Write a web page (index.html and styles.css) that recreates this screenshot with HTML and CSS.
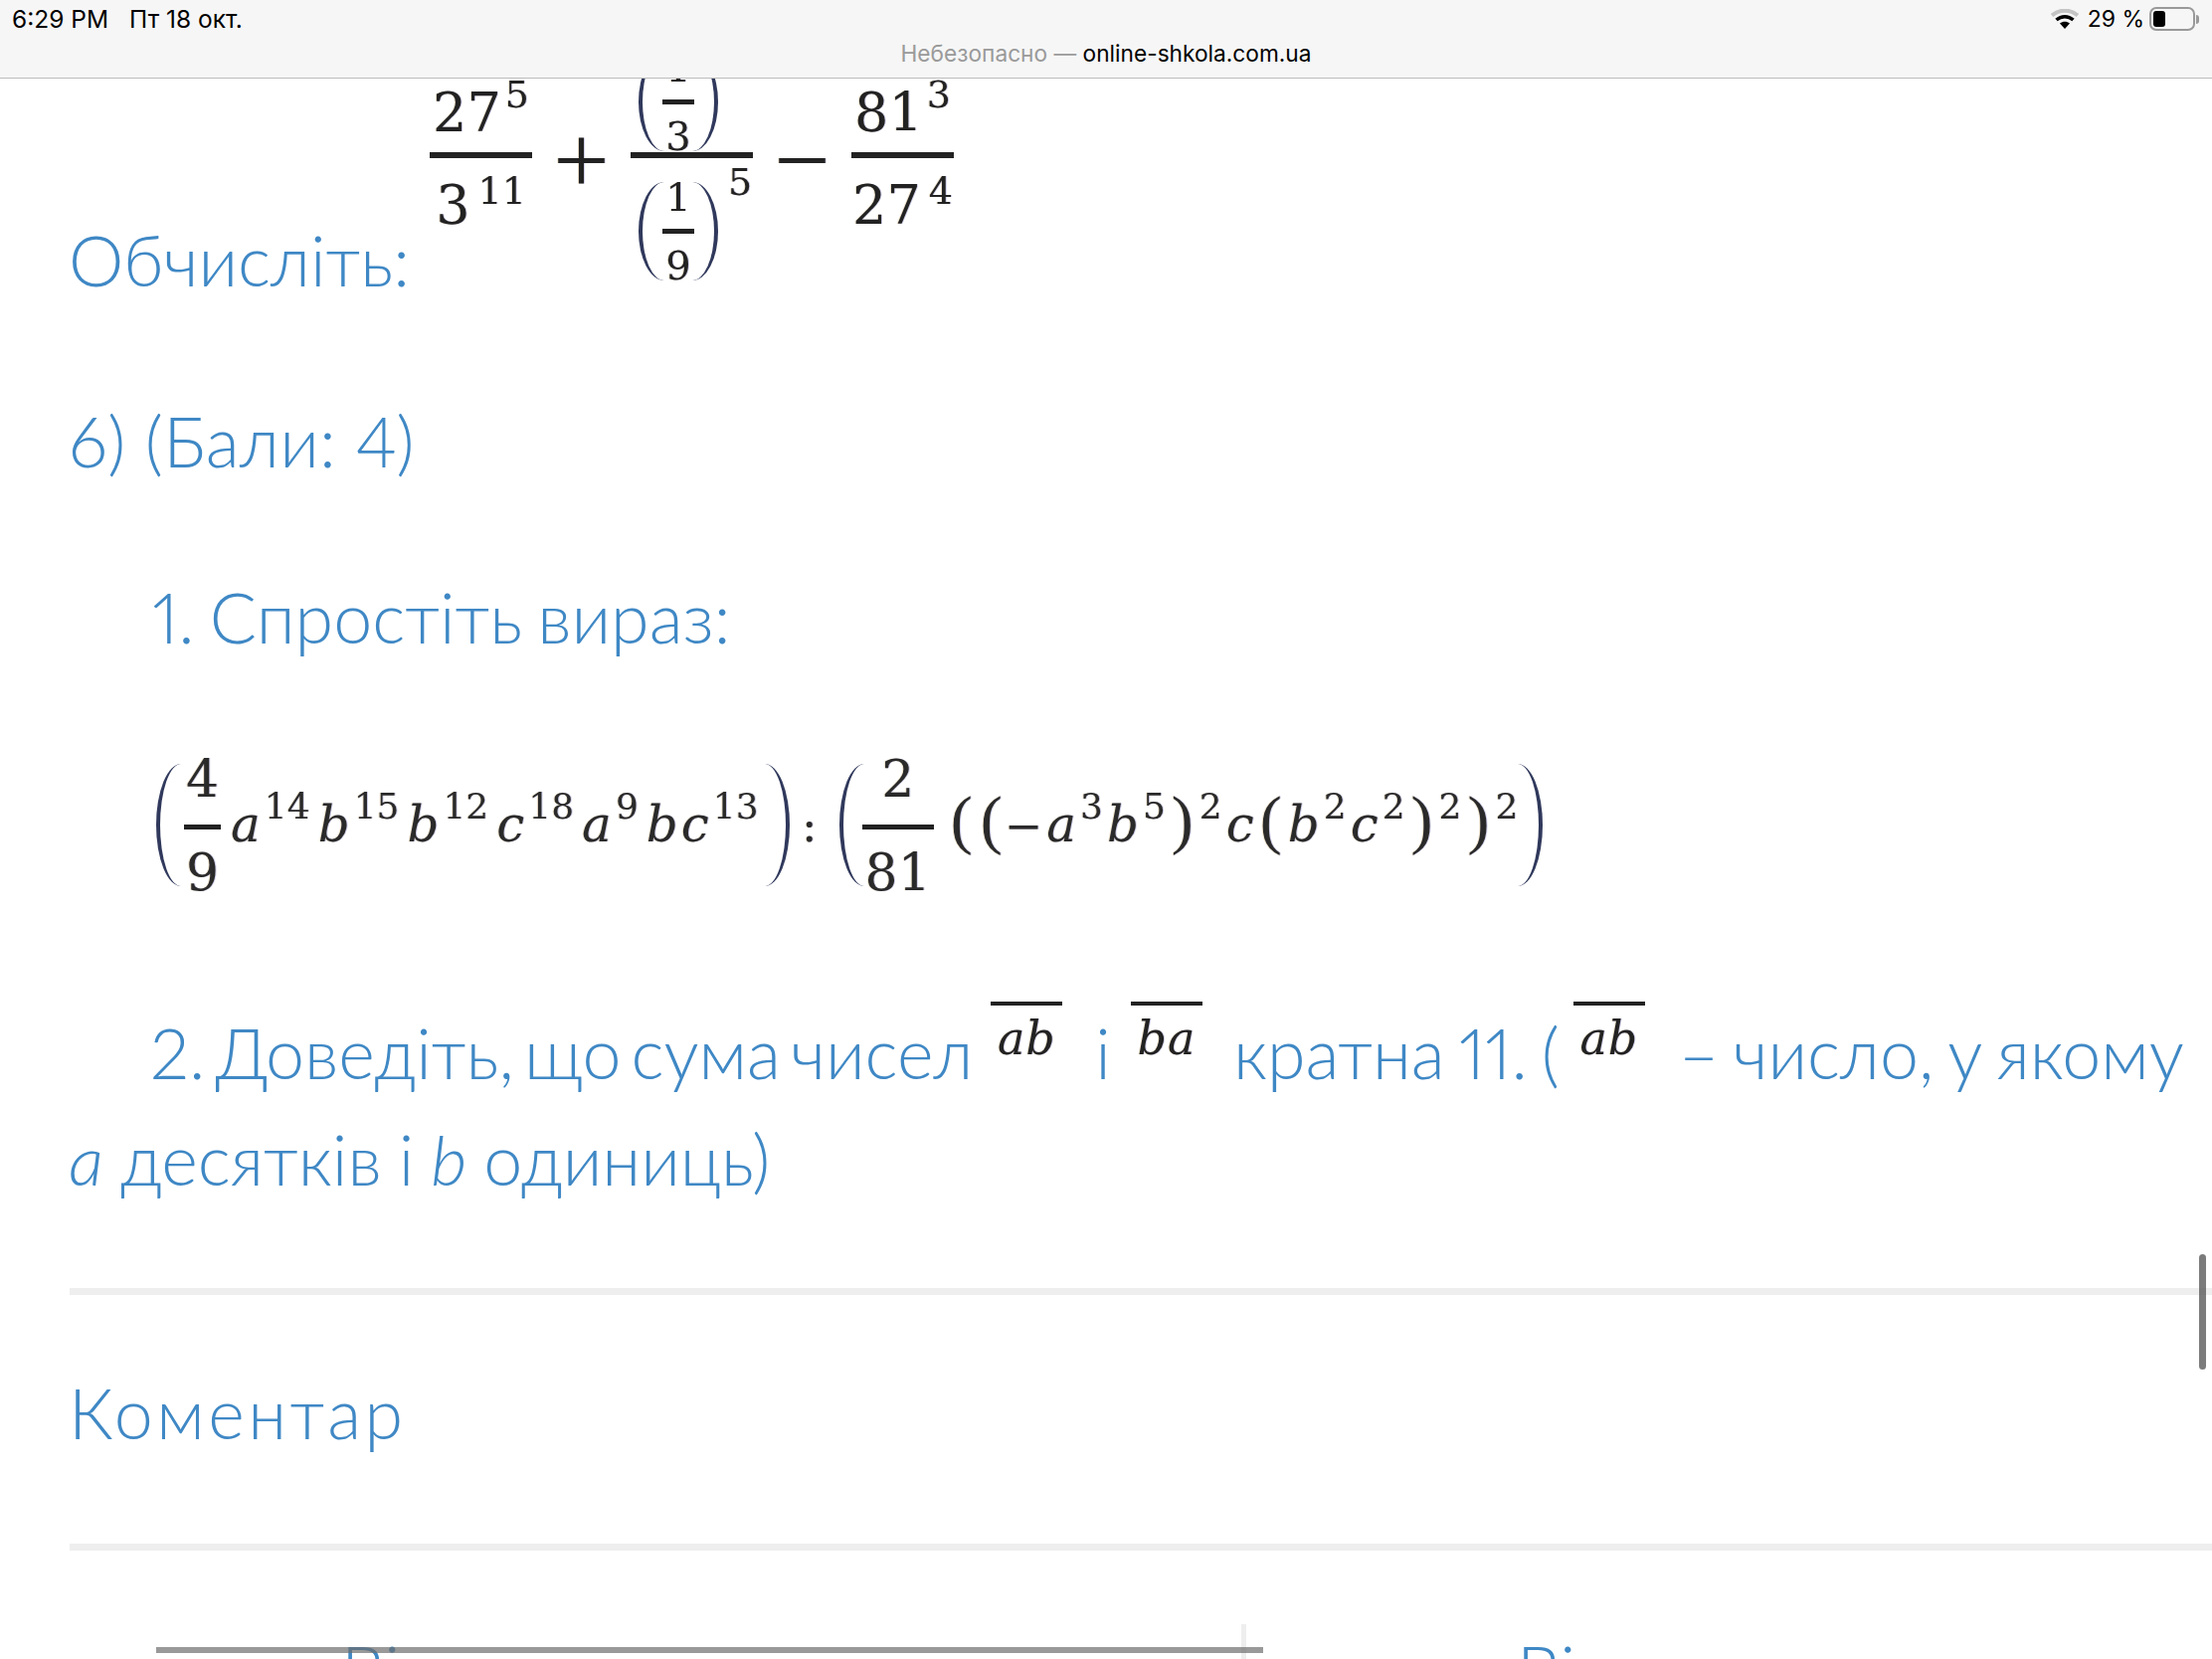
FILE: index.html
```html
<!DOCTYPE html>
<html lang="uk">
<head>
<meta charset="utf-8">
<title>online-shkola.com.ua</title>
<link rel="stylesheet" href="styles.css">
</head>
<body>
<header class="bar">
  <div class="status">
    <div class="status-left"><span>6:29 PM</span><span>Пт 18 окт.</span></div>
    <div class="status-right">
      <svg class="wifi" width="28" height="20" viewBox="0 0 28 20"><path d="M1 6.500C8.500 0 19.500 0 27 6.500" fill="none" stroke="#c4c4c4" stroke-width="4"/><path d="M5.500 11C10.500 6.500 17.500 6.500 22.500 11" fill="none" stroke="#000" stroke-width="3.500"/><path d="M14 20L9 14.500C12 12 16 12 19 14.500Z" fill="#000"/></svg>
      <span class="pct">29 %</span>
      <div class="battery"><div class="battery-fill"></div></div>
      <div class="nub"></div>
    </div>
  </div>
  <div class="address"><span class="insecure">Небезопасно — </span>online-shkola.com.ua</div>
</header>
<main class="page">
  <div class="calc">
    <p class="label">Обчисліть:</p>
    <div class="bigmath">
      <div class="frac">
        <div class="num"><span class="expr">27<sup>5</sup></span></div>
        <div class="rule"></div>
        <div class="den"><span class="expr">3<sup class="low">11</sup></span></div>
      </div>
      <div class="op">+</div>
      <div class="frac wide">
        <div class="num left">
          <div class="pgroup"><div class="paren-l mid"></div><div class="mini"><span>1</span><div class="mini-rule"></div><span>3</span></div><div class="paren-r mid"></div></div>
        </div>
        <div class="rule"></div>
        <div class="den lower">
          <div class="pgroup drop"><div class="paren-l mid"></div><div class="mini"><span>1</span><div class="mini-rule"></div><span>9</span></div><div class="paren-r mid"></div></div>
          <span class="lone">5</span>
        </div>
      </div>
      <div class="op">−</div>
      <div class="frac">
        <div class="num"><span class="expr">81<sup>3</sup></span></div>
        <div class="rule"></div>
        <div class="den"><span class="expr">27<sup class="low">4</sup></span></div>
      </div>
    </div>
  </div>
  <p class="line score">6) (Бали: 4)</p>
  <p class="line indent task">1. Спростіть вираз:</p>
  <div class="formula">
    <div class="paren-l big"></div>
    <div class="sfrac"><span>4</span><div class="rule"></div><span>9</span></div>
    <div class="run"><i>a</i><sup>14</sup><i>b</i><sup>15</sup><i>b</i><sup>12</sup><i>c</i><sup>18</sup><i>a</i><sup>9</sup><i>b</i><i class="tight">c</i><sup>13</sup></div>
    <div class="paren-r big"></div>
    <div class="colon">:</div>
    <div class="paren-l big"></div>
    <div class="sfrac second"><span>2</span><div class="rule"></div><span>81</span></div>
    <div class="run run2"><b class="p">(</b><b class="p">(</b><span class="m">−</span><i>a</i><sup>3</sup><i>b</i><sup>5</sup><b class="p">)</b><sup>2</sup><i>c</i><b class="p">(</b><i>b</i><sup>2</sup><i>c</i><sup>2</sup><b class="p">)</b><sup>2</sup><b class="p">)</b><sup>2</sup></div>
    <div class="paren-r big"></div>
  </div>
  <p class="line proof"><span class="indent-in">2. Доведіть, що сума чисел</span><span class="over o1">ab</span>і<span class="over o2">ba</span>кратна 11. (<span class="over o3">ab</span>– число, у якому<br><span class="second-line"><em>a</em> десятків і <em>b</em> одиниць)</span></p>
  <hr class="divider first">
  <p class="line comment">Коментар</p>
  <hr class="divider second-rule">
  <div class="cols">
    <div class="col">Ві</div>
    <div class="col">Ві</div>
  </div>
</main>
<div class="scroll-h"></div>
<div class="scroll-v"></div>
</body>
</html>
```
FILE: styles.css
```css
* { box-sizing: border-box; }
html, body { margin: 0; padding: 0; }
body {
  width: 2224px;
  height: 1668px;
  overflow: hidden;
  background: #fff;
  font-family: "Lato", "Open Sans", sans-serif;
  display: flex;
  flex-direction: column;
}
.bar {
  height: 79px;
  flex: none;
  background: #f6f6f6;
  border-bottom: 1px solid #bdbdbd;
  font-family: "Inter", "Liberation Sans", sans-serif;
  color: #000;
  position: relative;
  z-index: 2;
}
.status {
  height: 38px;
  display: flex;
  justify-content: space-between;
  align-items: center;
  padding: 0 13px 0 12px;
  font-size: 24.500px;
}
.status-left { display: flex; gap: 21px; }
.status-right { display: flex; align-items: center; }
.wifi { margin-right: 9px; }
.pct { margin-right: 5px; font-size: 23px; }
.battery {
  width: 46px;
  height: 24px;
  border: 2px solid #999;
  border-radius: 7px;
  padding: 2px;
}
.battery-fill { width: 12px; height: 100%; background: #000; border-radius: 3px; }
.nub { width: 3px; height: 9px; margin-left: 1px; background: #999; border-radius: 0 3px 3px 0; }
.address {
  text-align: center;
  font-size: 22.700px;
  line-height: 32px;
}
.insecure { color: #9a9a9a; }

.page {
  flex: 1;
  min-height: 0;
  overflow: hidden;
  color: #3f88c5;
  font-weight: 300;
  font-size: 70px;
  font-variant-numeric: proportional-nums;
}
.calc {
  display: flex;
  align-items: flex-end;
  margin-top: -26px;
  padding-left: 69px;
  height: 229px;
}
.label { margin: 0 23px -29px 0; width: 340px; line-height: 100px; flex: none; }
.bigmath {
  display: flex;
  align-items: flex-start;
  height: 229px;
  color: #222;
  font-family: "DejaVu Serif", serif;
  font-weight: 400;
  font-size: 54px;
  filter: blur(0.7px);
  text-shadow: 1px 0 0 rgba(0, 0, 140, .2), -1px 0 0 rgba(170, 110, 0, .2);
}
.frac { width: 103px; display: flex; flex-direction: column; flex: none; }
.frac.wide { width: 123px; }
.num {
  height: 100px;
  display: flex;
  align-items: flex-end;
  justify-content: center;
  padding-bottom: 9px;
  line-height: 60px;
}
.num.left { justify-content: flex-start; padding-left: 8px; }
.rule { height: 6px; background: #222; flex: none; }
.den {
  display: flex;
  align-items: flex-start;
  justify-content: center;
  padding-top: 18px;
  line-height: 60px;
}
.den.lower { padding-top: 9px; justify-content: flex-start; padding-left: 8px; }
.expr sup { font-size: 38px; line-height: 0; margin-left: 4px; vertical-align: 24px; }
.expr sup.low { vertical-align: 20px; margin-left: 8px; letter-spacing: 0; }
.lone { font-size: 38px; line-height: 30px; margin-left: 10px; flex: none; }
.op { width: 99px; height: 218px; display: flex; align-items: center; justify-content: center; font-family: "Liberation Serif", serif; font-size: 100px; line-height: 1; flex: none; }
.pgroup { display: flex; align-items: center; height: 99px; margin-bottom: -8px; }
.pgroup.drop { margin: 15px 0 0; }
.mini { display: flex; flex-direction: column; align-items: center; width: 28px; font-size: 40px; line-height: 64px; flex: none; }
.mini-rule { width: 32px; height: 5px; background: #222; flex: none; }
.paren-l, .paren-r { flex: none; border: 0 solid #30395c; }
.paren-l { border-left-width: 4px; border-radius: 100% 0 0 100% / 50% 0 0 50%; }
.paren-r { border-right-width: 4px; border-radius: 0 100% 100% 0 / 0 50% 50% 0; }
.mid { width: 26px; height: 99px; }
.big { width: 25px; height: 123px; }

.line { margin: 0; line-height: 107px; white-space: nowrap; padding-left: 69px; }
.score { margin-top: 108px; letter-spacing: .3px; }
.task { margin-top: 70px; word-spacing: -4px; }
.line.indent { padding-left: 153px; }
.formula {
  display: flex;
  align-items: center;
  height: 135px;
  margin-top: 88px;
  padding-left: 157px;
  color: #2a2a2a;
  font-family: "DejaVu Serif", serif;
  font-weight: 400;
  font-size: 46px;
  filter: blur(0.6px);
  text-shadow: 1px 0 0 rgba(0, 0, 140, .2), -1px 0 0 rgba(170, 110, 0, .2);
}
.sfrac { display: flex; flex-direction: column; align-items: center; width: 37px; margin: 0 10px 0 3px; font-size: 52px; line-height: 64px; flex: none; }
.sfrac .rule { width: 37px; height: 5px; margin: 14px 0 11px; }
.sfrac.second { width: 72px; margin: 0 15px 0 -2px; }
.sfrac.second .rule { width: 72px; }
.run { line-height: 60px; white-space: nowrap; flex: none; margin-right: 6px; }
.run i { font-size: 50px; margin-left: 8px; }
.run i:first-child { margin-left: 0; }
.run i.tight { margin-left: 3px; }
.run sup { font-size: 36px; line-height: 0; margin-left: 4px; vertical-align: 23px; }
.colon { width: 20px; margin: 0 20px 0 10px; text-align: center; flex: none; }
.run2 { margin-right: 0; }
.run2 i { margin-left: 4px; }
.p { font-family: "Liberation Serif", serif; font-weight: 400; font-size: 66px; line-height: 0; margin: 0 2px 0 6px; }
.p:first-child { margin-left: 2px; }
.m { line-height: 0; }

.proof { margin-top: 108px; word-spacing: -5px; }
.indent-in { margin-left: 82px; word-spacing: -9px; }
.second-line { word-spacing: -2px; }
.over {
  display: inline-block;
  width: 72px;
  border-top: 4px solid #222;
  color: #222;
  font-family: "DejaVu Serif", serif;
  font-style: italic;
  font-weight: 400;
  font-size: 46px;
  line-height: 66px;
  height: 70px;
  letter-spacing: 1px;
  word-spacing: 0;
  text-align: center;
  vertical-align: 25px;
  filter: blur(0.6px);
  text-shadow: 1px 0 0 rgba(0, 0, 140, .2), -1px 0 0 rgba(170, 110, 0, .2);
}
.o1 { margin: 0 33px 0 18px; }
.o2 { margin: 0 31px 0 20px; }
.o3 { margin: 0 34px 0 14px; }
.divider { height: 7px; background: #eee; border: 0; margin: 0 0 0 70px; }
.first { margin-top: 76px; }
.comment { margin-top: 65px; letter-spacing: 3.500px; }
.second-rule { margin-top: 78px; }
.cols {
  display: grid;
  grid-template-columns: 1091px 1fr;
  margin: 74px 0 0 157px;
  height: 40px;
}
.col { line-height: 1; padding: 11px 0 0 186px; }
.col + .col { border-left: 5px solid #eee; padding-left: 272px; }

.scroll-h { position: fixed; left: 157px; top: 1656px; width: 1113px; height: 6px; background: rgba(110, 110, 110, .7); z-index: 3; }
.scroll-v { position: fixed; left: 2211px; top: 1261px; width: 7px; height: 116px; border-radius: 4px; background: rgba(90, 90, 90, .8); z-index: 3; }
```
